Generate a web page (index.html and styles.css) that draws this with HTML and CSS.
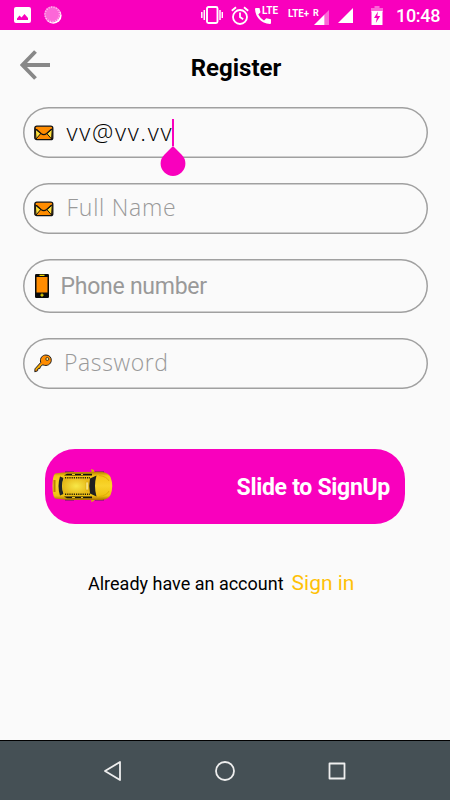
FILE: index.html
```html
<!DOCTYPE html>
<html lang="en">
<head>
  <meta charset="UTF-8" />
  <meta name="viewport" content="width=device-width, initial-scale=1.0"/>
  <title>Register</title>
  <link rel="stylesheet" href="styles.css">
</head>
<body>
  <div class="status-bar">
    <svg class="ic-picture" width="17" height="17" viewBox="0 0 17 17">
      <path fill="#fff" fill-rule="evenodd" d="M2 0h13q2 0 2 2v12q0 2-2 2H2q-2 0-2-2V2q0-2 2-2zM3 13h11v-2l-3.500-4-3 3.500L5.500 8.500 3 11.500z"/>
    </svg>
    <svg class="ic-sync" width="18" height="18" viewBox="0 0 18 18">
      <circle cx="9.300" cy="9.500" r="8.300" fill="#fff"/>
      <circle cx="8.300" cy="8.300" r="8.100" fill="#fc67d8"/>
      <circle cx="8.300" cy="8.300" r="7.200" fill="none" stroke="#ffc0ef" stroke-width="1.500" stroke-dasharray="1 1.500"/>
    </svg>
    <span class="spacer"></span>
    <svg class="ic-vibrate" width="22" height="18" viewBox="0 0 22 18" fill="none" stroke="#fff">
      <rect x="6" y="1" width="10.500" height="16" rx="1.500" stroke-width="1.900"/>
      <path stroke-width="1.500" d="M3.300 4v10M.8 6v6M19 4v10M21.300 6v6"/>
    </svg>
    <svg class="ic-alarm" width="18" height="19" viewBox="0 0 18 19" fill="none" stroke="#fff" stroke-width="1.800">
      <circle cx="9" cy="11" r="7"/>
      <path d="M9 6.500V11l3.200 2.200M.8 4.800L5 1.200M17.200 4.800L13 1.200"/>
    </svg>
    <svg class="ic-call" width="24" height="20" viewBox="0 0 24 20" fill="#fff">
      <path d="M1 3h3.500l1 4.300-2.200 2.200q2 4 5.700 5.900l2.300-2.200 4.700 1V18q0 .9-1 .9Q8 18.500 4 14 .4 10 0 4q0-1 1-1z"/>
      <text class="tiny bold" x="7" y="9" textLength="16" lengthAdjust="spacingAndGlyphs">LTE</text>
    </svg>
    <svg class="ic-lte" width="42" height="19" viewBox="0 0 42 19" fill="#fff">
      <text class="tiny bold" x="0" y="11" textLength="21" lengthAdjust="spacingAndGlyphs">LTE+</text>
      <text class="tiny roaming" x="25" y="10">R</text>
      <path d="M26 19L36.500 8.500V19z"/>
      <path opacity=".4" d="M36.500 8.500L41 4v15h-4.500z"/>
    </svg>
    <svg class="ic-signal" width="15" height="15" viewBox="0 0 15 15"><path fill="#fff" d="M0 15L15 0v15z"/></svg>
    <svg class="ic-battery" width="12" height="19" viewBox="0 0 12 19">
      <path fill="#fff" opacity=".4" d="M3.500 0h5v2H12v4H0V2h3.500z"/>
      <path fill="#fff" d="M.5 5h11v14H.5z"/>
      <path fill="#f900bd" d="M7 5.500L3 12h2.800l-1 5L9.200 10H6.300z"/>
    </svg>
    <span class="clock">10:48</span>
  </div>

  <header class="header">
    <svg class="back" width="30" height="30" viewBox="0 0 30 30" fill="none" stroke="#888" stroke-width="3.900">
      <path d="M30 15H3M15.500 1.500L2.500 15l13 13.500"/>
    </svg>
    <h1 class="title">Register</h1>
  </header>

  <main class="form">
    <div class="field">
      <svg class="field-icon mail" width="20" height="16" viewBox="0 0 20 16" stroke="#111" stroke-width="1.300" stroke-linejoin="round">
        <rect x=".8" y="1.200" width="18" height="13.500" rx="2" fill="#ff8c00"/>
        <path fill="#ffe03a" stroke-width="1" d="M1.300 4l5.500 4.500L2 14zM18.300 4l-5.500 4.500L17.600 14z"/>
        <path fill="#ff8c00" stroke-width="1.100" d="M1.500 3.500L7 8.500q2.800 2.200 5.600 0l5.600-5"/>
        <path fill="#ff8c00" stroke="none" d="M2 2h15.600v2H2z"/>
      </svg>
      <span class="value light email">vv@vv.vv</span>
      <span class="caret"><svg class="handle" width="26" height="31" viewBox="0 0 26 31"><path fill="#f900bd" d="M13 0l8.700 8.700a12.400 12.400 0 1 1-17.400 0z"/></svg></span>
    </div>
    <div class="field">
      <svg class="field-icon mail" width="20" height="16" viewBox="0 0 20 16" stroke="#111" stroke-width="1.300" stroke-linejoin="round">
        <rect x=".8" y="1.200" width="18" height="13.500" rx="2" fill="#ff8c00"/>
        <path fill="#ffe03a" stroke-width="1" d="M1.300 4l5.500 4.500L2 14zM18.300 4l-5.500 4.500L17.600 14z"/>
        <path fill="#ff8c00" stroke-width="1.100" d="M1.500 3.500L7 8.500q2.800 2.200 5.600 0l5.600-5"/>
        <path fill="#ff8c00" stroke="none" d="M2 2h15.600v2H2z"/>
      </svg>
      <span class="hint light name">Full Name</span>
    </div>
    <div class="field phone">
      <svg class="field-icon mobile" width="14" height="24" viewBox="0 0 14 24">
        <rect width="14" height="24" rx="1.200" fill="#0a0a0a"/>
        <path fill="#ff8c00" d="M1.500 3h11v15.500h-11z"/>
        <path fill="#e8d800" d="M4.500.7h5v1.300h-5zM6.400 19.600h1.200v1h1v1.200h-1v1H6.400v-1h-1v-1.200h1z"/>
      </svg>
      <span class="hint number">Phone number</span>
    </div>
    <div class="field">
      <svg class="field-icon key" width="18" height="19" viewBox="0 0 18 19">
        <path fill="#ff8c00" stroke="#222" d="M8.800 10.800L6.500 12.500 5.800 14.500l-2 .3-.2 2-2.800 1 .2-3L6.700 8.500C5.500 4 8.500 1 12 1c3.500 0 5.500 2.500 5.300 5.500-.3 3.500-4 6.300-8.500 4.300z"/>
        <path stroke="#e8d800" d="M2 15.500l5-5"/>
        <circle cx="13.300" cy="5" r="1.500" fill="#ffe98a" stroke="#222" stroke-width=".8"/>
      </svg>
      <span class="hint light password">Password</span>
    </div>
  </main>

  <div class="slide-btn">
    <svg class="taxi" width="61" height="34" viewBox="0 0 61 34">
      <defs>
        <linearGradient id="body" x1="0" y1="0" x2="0" y2="1">
          <stop offset="0" stop-color="#b47c00"/>
          <stop offset=".15" stop-color="#f3c713"/>
          <stop offset=".5" stop-color="#f8d42c"/>
          <stop offset=".85" stop-color="#efc010"/>
          <stop offset="1" stop-color="#a87000"/>
        </linearGradient>
        <radialGradient id="roof">
          <stop offset="0" stop-color="#f8e848"/>
          <stop offset="1" stop-color="#e6b818"/>
        </radialGradient>
      </defs>
      <path fill="#5c2850" d="M13 2.500h9V5h-9zM43 2.500h9V5h-9zM13 29h9v2.500h-9zM43 29h9v2.500h-9z"/>
      <path fill="#dca90c" d="M39 0l3 1v4h-2zM39 33l3-1v-4h-2z"/>
      <path fill="url(#body)" d="M3 4.500q9-2 20-1.500l27-.3q6 .8 8.500 5.300 3.500 9 0 18-2.500 4.500-8.500 5L24 31q-11 0-21-1.500Q.5 27 .5 17T3 4.500z"/>
      <path fill="#b98300" d="M1.500 11h2v12h-2z"/>
      <path fill="#171510" d="M15 4.800h25v1.600H12zM12 27.600h28v1.600H15z"/>
      <path stroke="#edc31b" d="M20 5.500h3M29 5.500h2M20 28.500h3M29 28.500h2"/>
      <path fill="#20242a" d="M8 7.500l3.500 1.500q-3 8 0 16L8 26.500q-3-9.500 0-19z"/>
      <path fill="url(#roof)" d="M12 8h26v18H12q-3-9 0-18z"/>
      <path stroke="#252006" stroke-width="1.600" stroke-dasharray="1.200 1" d="M13 8.800h25M13 25.200h25"/>
      <path fill="#202020" d="M38 9.500L44.500 6.500q-3 10.500 0 21L38 24.500q-1.500-7.500 0-15z"/>
      <path fill="#fff3a0" stroke="#dca90c" stroke-width=".7" d="M34 13h2.200v8H34z"/>
      <path fill="none" stroke="#e0ad08" d="M47 6.500q8 1 10 5.500M47 27.500q8-1 10-5.500"/>
    </svg>
    <span class="slide-text">Slide to SignUp</span>
  </div>

  <div class="signin">
    <span class="signin-text">Already have an account</span>
    <a class="signin-link">Sign in</a>
  </div>

  <nav class="nav-bar">
    <svg width="20" height="22" viewBox="0 0 20 22"><path d="M17 2v18L2 11z"/></svg>
    <svg width="22" height="22" viewBox="0 0 22 22"><circle cx="11" cy="11" r="9"/></svg>
    <svg width="20" height="22" viewBox="0 0 20 22"><rect x="2.500" y="3.500" width="15" height="15"/></svg>
  </nav>
</body>
</html>
```
FILE: styles.css
```css
:root {
  --pink: #f900bd;
  --bg: #fafafa;
  --hint: #999999;
}

* {
  box-sizing: border-box;
}

body {
  margin: 0;
  width: 450px;
  height: 800px;
  display: flex;
  flex-direction: column;
  overflow: hidden;
  font-family: Roboto, sans-serif;
  background-color: var(--bg);
  color: #000;
}

svg {
  display: block;
  flex: none;
}

.status-bar {
  height: 30px;
  flex: none;
  display: flex;
  align-items: center;
  padding: 0 10px 0 14px;
  background: var(--pink);
}

.ic-sync { margin-left: 13px; }
.spacer { flex: 1; }
.ic-alarm { margin-left: 8px; }
.ic-call { margin: 0 0 0 6px; }
.ic-lte { margin: 0 0 0 9px; }
.ic-signal { margin: 1px 0 0 8px; }
.ic-battery { margin: 1px 0 0 18px; }

.tiny {
  font-size: 11px;
  font-weight: 500;
}

.bold {
  font-weight: 700;
}

.roaming {
  font-size: 9px;
  font-weight: 700;
}

.clock {
  width: 44px;
  margin: 1px 0 0 13px;
  color: #fff;
  font-size: 18px;
  font-weight: 500;
  letter-spacing: -0.3px;
  line-height: 30px;
  white-space: nowrap;
}

.header {
  height: 77px;
  flex: none;
  display: grid;
  grid-template-columns: 55px 1fr 55px;
  padding: 20px 0 0 20px;
}

.title {
  margin: 3px 0 0;
  padding-left: 2px;
  font-size: 24px;
  font-weight: 700;
  line-height: 30px;
  text-align: center;
}

.form {
  display: flex;
  flex-direction: column;
  gap: 25px;
  padding: 0 22.5px;
}

.field {
  height: 51px;
  display: flex;
  align-items: center;
  padding-left: 11.5px;
  box-shadow: inset 0 0 0 1.5px #a0a0a0;
  border-radius: 27px;
  font-size: 23px;
  line-height: 30px;
  white-space: nowrap;
}

.phone {
  height: 53.5px;
}

.hint {
  color: var(--hint);
}

.light {
  padding-bottom: 3px;
  font-family: "Open Sans", "Noto Sans", sans-serif;
  font-weight: 300;
}

.email {
  padding-bottom: 2px;
  font-size: 24px;
  letter-spacing: 1.7px;
  margin-right: -1px;
}

.name { letter-spacing: 0.75px; }
.password { letter-spacing: 0.6px; }

.number {
  padding-top: 3px;
  letter-spacing: -0.25px;
}

.mail { margin-right: 12.5px; }
.mobile { margin: 0 12px 0 0.5px; }
.key { margin-right: 12px; }

.caret {
  position: relative;
  width: 2px;
  height: 27px;
  background: var(--pink);
}

.handle {
  position: absolute;
  left: -12px;
  top: 27px;
}

.slide-btn {
  height: 75px;
  flex: none;
  display: flex;
  align-items: center;
  justify-content: space-between;
  margin: 60px 45px 0;
  padding: 0 15px 0 7px;
  border-radius: 30px;
  background: var(--pink);
}

.slide-text {
  padding-top: 2px;
  color: #fff;
  font-size: 23px;
  font-weight: 700;
  letter-spacing: -0.3px;
}

.signin {
  display: flex;
  align-items: baseline;
  gap: 8px;
  margin: 47px 0 0 88px;
  white-space: nowrap;
}

.signin-text {
  font-size: 18px;
}

.signin-link {
  color: #ffc107;
  font-size: 21px;
}

.nav-bar {
  height: 60px;
  flex: none;
  display: flex;
  align-items: center;
  justify-content: space-between;
  margin-top: auto;
  padding: 0 103px;
  border-top: 1px solid #000;
  background: #455055;
}

.nav-bar svg {
  fill: none;
  stroke: #eee;
  stroke-width: 1.800;
  stroke-linejoin: round;
}
```
